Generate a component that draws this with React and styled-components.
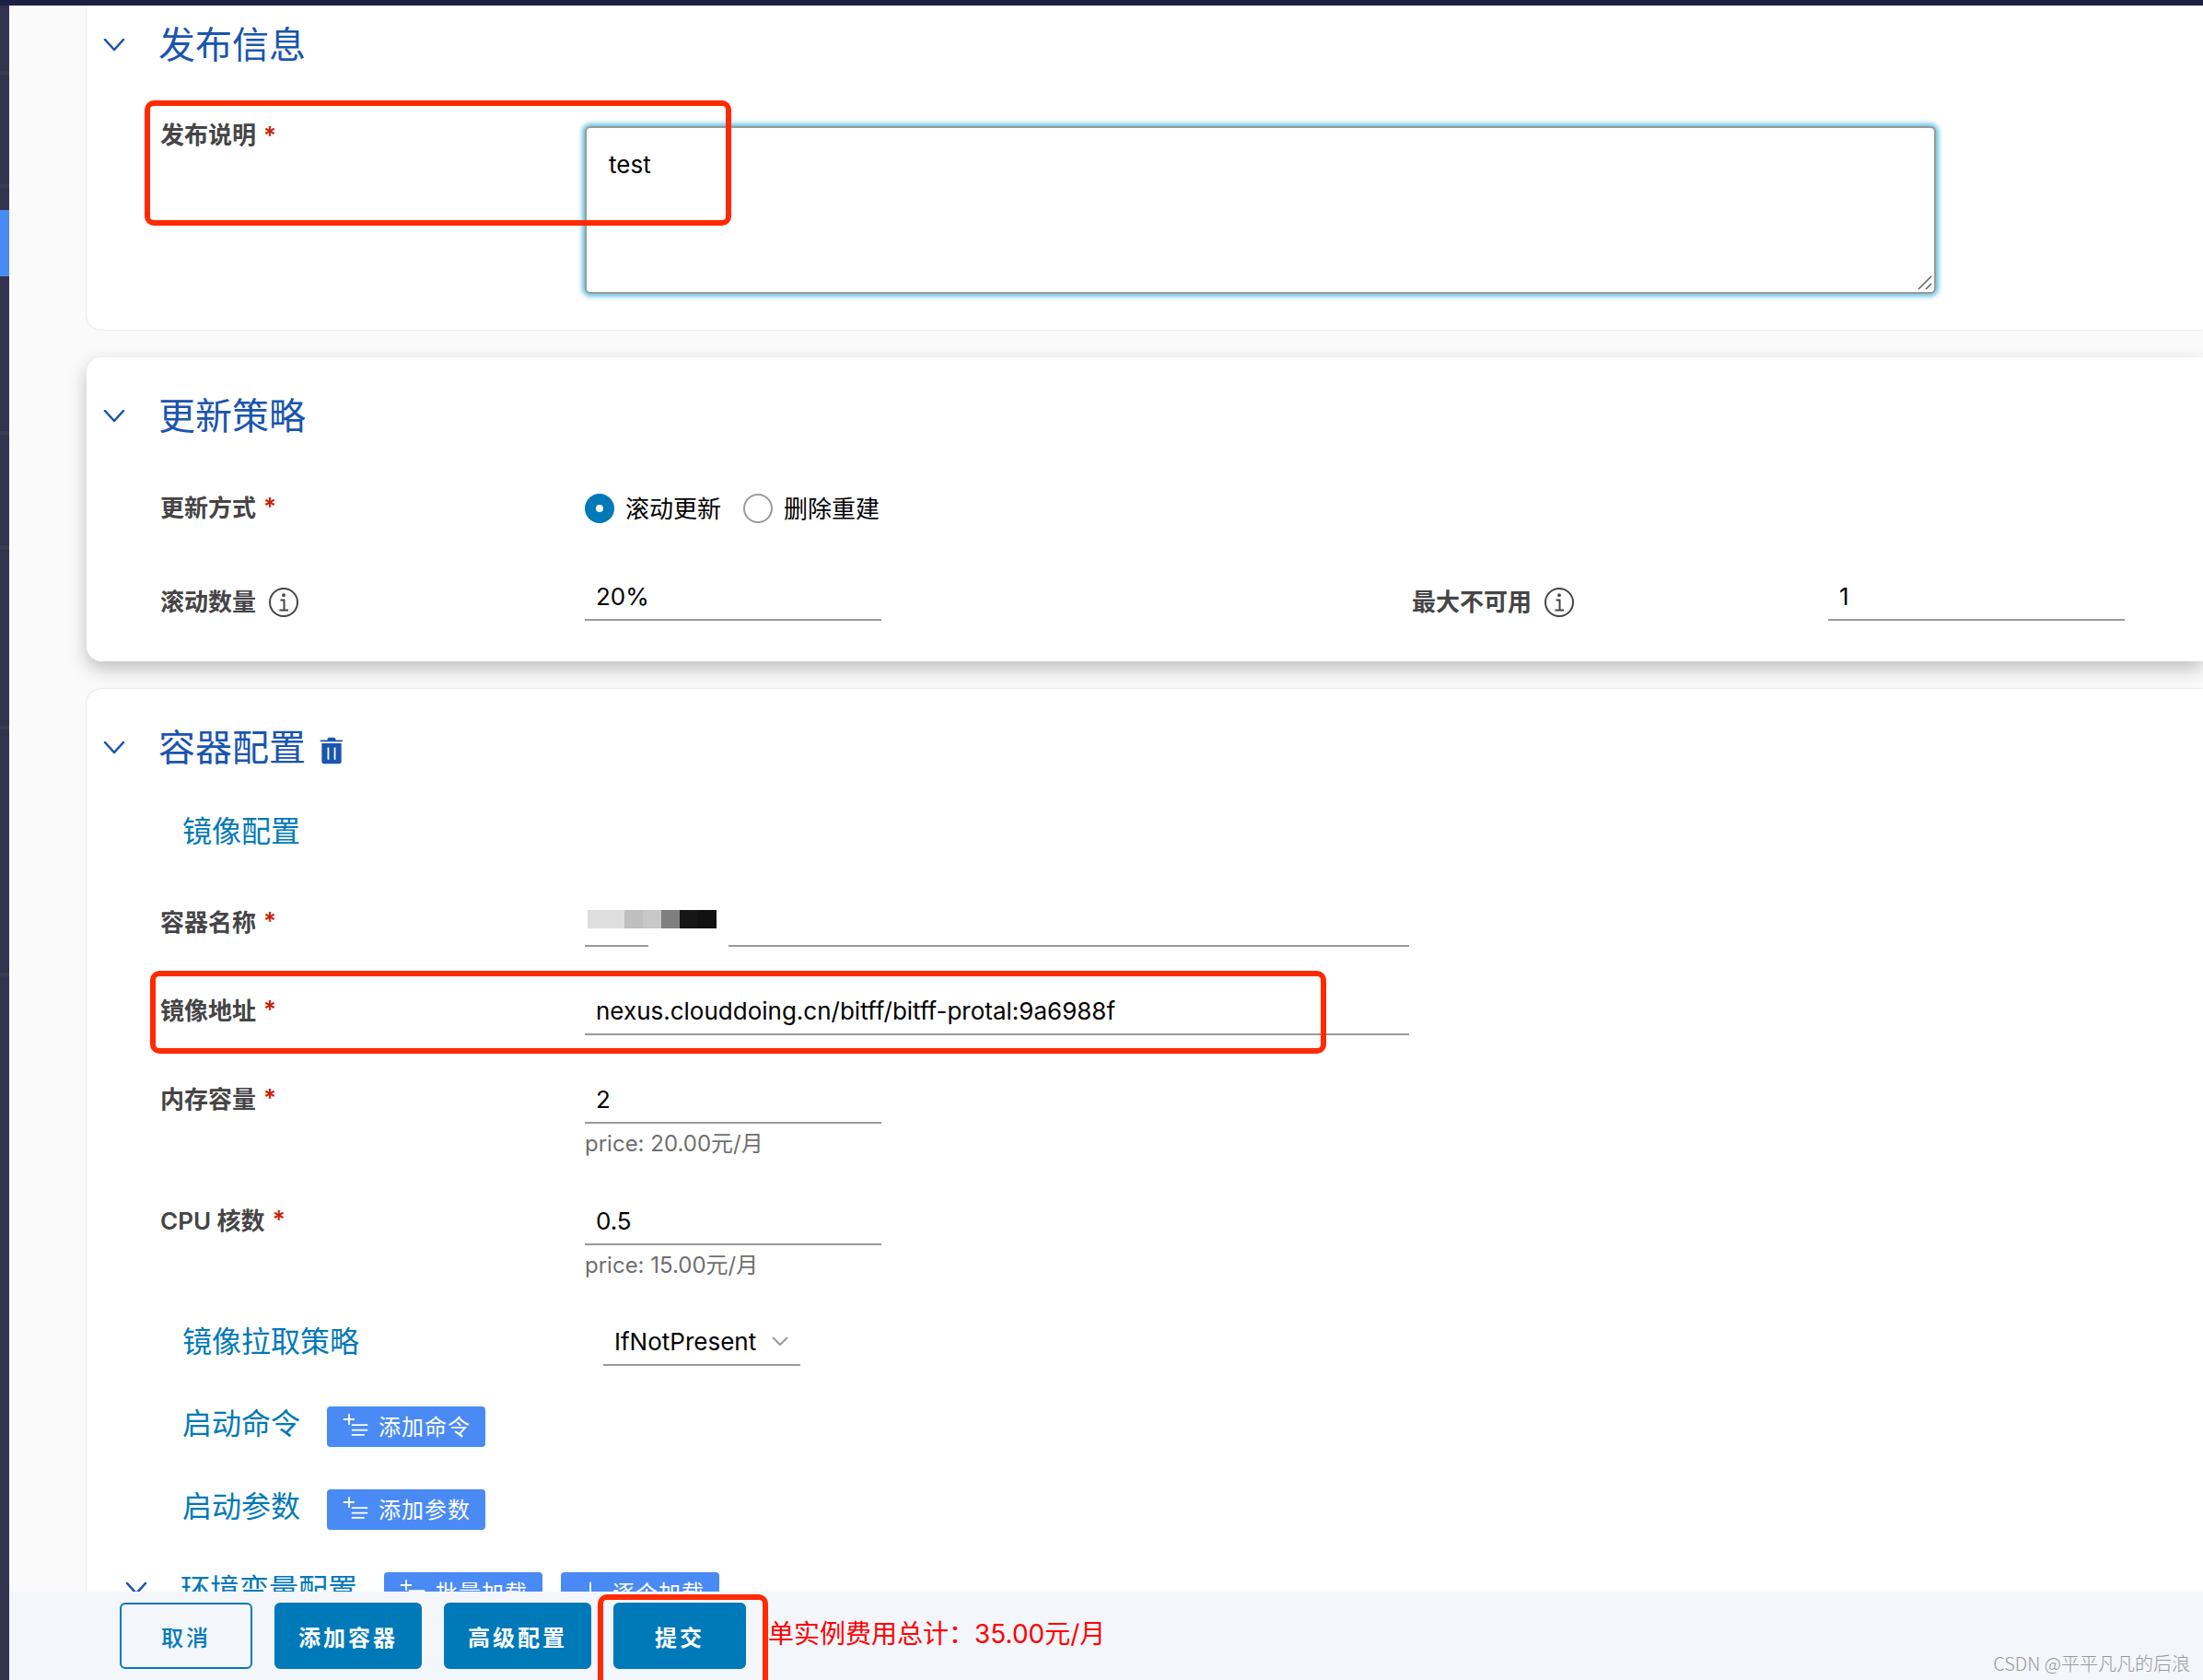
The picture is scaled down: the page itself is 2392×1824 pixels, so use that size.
import React, { useState } from "react";
import styled, { createGlobalStyle, css } from "styled-components";

const Page = () => {
  const [strategy, setStrategy] = useState("rolling");

  return (
    <Shell>
      <GlobalStyle />
      <TopBar />
      <Body>
        <SideBar aria-label="导航">
          {navItems.map((item) => (
            <NavItem
              key={item.id}
              $height={item.height}
              $active={item.active}
              $divided={item.divided}
            />
          ))}
        </SideBar>

        <Main>
          <Content>
            <Card $first>
              <CardHeader>
                <ToggleButton type="button" aria-label="收起发布信息">
                  <Chevron />
                </ToggleButton>
                <CardTitle>发布信息</CardTitle>
              </CardHeader>
              <NoteRow>
                <NoteLabel htmlFor="note">
                  发布说明<Required>*</Required>
                </NoteLabel>
                <TextAreaBox>
                  <TextArea id="note" defaultValue="test" />
                  <Grip viewBox="0 0 16 16" aria-hidden="true">
                    <path d="M1 15L15 1M9 15l6-6" />
                  </Grip>
                </TextAreaBox>
                <NoteMark />
              </NoteRow>
            </Card>

            <Card $raised>
              <CardHeader>
                <ToggleButton type="button" aria-label="收起更新策略">
                  <Chevron />
                </ToggleButton>
                <CardTitle>更新策略</CardTitle>
              </CardHeader>
              <FormRow>
                <Label as="span" id="strategy-label">
                  更新方式<Required>*</Required>
                </Label>
                <RadioGroup role="radiogroup" aria-labelledby="strategy-label">
                  <RadioLabel>
                    <Radio
                      type="radio"
                      name="strategy"
                      checked={strategy === "rolling"}
                      onChange={() => setStrategy("rolling")}
                    />
                    <Caption>滚动更新</Caption>
                  </RadioLabel>
                  <RadioLabel>
                    <Radio
                      type="radio"
                      name="strategy"
                      checked={strategy === "recreate"}
                      onChange={() => setStrategy("recreate")}
                    />
                    <Caption>删除重建</Caption>
                  </RadioLabel>
                </RadioGroup>
              </FormRow>
              <DoubleRow>
                <InfoLabel htmlFor="surge">
                  <Caption>滚动数量</Caption>
                  <InfoIcon />
                </InfoLabel>
                <Input id="surge" defaultValue="20%" />
                <InfoLabel htmlFor="unavailable">
                  <Caption>最大不可用</Caption>
                  <InfoIcon />
                </InfoLabel>
                <Input id="unavailable" defaultValue="1" />
              </DoubleRow>
            </Card>

            <Card>
              <CardHeader>
                <ToggleButton type="button" aria-label="收起容器配置">
                  <Chevron />
                </ToggleButton>
                <CardTitle>容器配置</CardTitle>
                <IconButton type="button" aria-label="删除容器">
                  <TrashIcon />
                </IconButton>
              </CardHeader>
              <SubHeader>
                <SubTitle>镜像配置</SubTitle>
              </SubHeader>
              <FormRow>
                <Label htmlFor="container">
                  容器名称<Required>*</Required>
                </Label>
                <MaskedField>
                  <Input id="container" $wide />
                  <Mosaic>
                    {mosaicColors.map((color, index) => (
                      <MosaicCell key={index} $color={color} />
                    ))}
                  </Mosaic>
                </MaskedField>
              </FormRow>
              <FormRow>
                <Label htmlFor="image">
                  镜像地址<Required>*</Required>
                </Label>
                <Input
                  id="image"
                  $wide
                  defaultValue="nexus.clouddoing.cn/bitff/bitff-protal:9a6988f"
                />
                <ImageMark />
              </FormRow>
              <FormRow $compact>
                <Label htmlFor="memory">
                  内存容量<Required>*</Required>
                </Label>
                <Field>
                  <Input id="memory" defaultValue="2" />
                  <HelpText>price: 20.00元/月</HelpText>
                </Field>
              </FormRow>
              <FormRow $compact>
                <Label htmlFor="cpu">
                  CPU 核数<Required>*</Required>
                </Label>
                <Field>
                  <Input id="cpu" defaultValue="0.5" />
                  <HelpText>price: 15.00元/月</HelpText>
                </Field>
              </FormRow>
              <PolicyRow>
                <SubTitle as="label" htmlFor="policy">
                  镜像拉取策略
                </SubTitle>
                <SelectBox>
                  <Select id="policy" defaultValue="IfNotPresent">
                    <option>IfNotPresent</option>
                    <option>Always</option>
                    <option>Never</option>
                  </Select>
                  <SelectArrow viewBox="0 0 18 10" aria-hidden="true">
                    <path d="M1 1l8 8 8-8" />
                  </SelectArrow>
                </SelectBox>
              </PolicyRow>
              <ActionRow>
                <SubTitle>启动命令</SubTitle>
                <SmallButton type="button">
                  <AddTextIcon />
                  <Caption>添加命令</Caption>
                </SmallButton>
              </ActionRow>
              <ActionRow>
                <SubTitle>启动参数</SubTitle>
                <SmallButton type="button">
                  <AddTextIcon />
                  <Caption>添加参数</Caption>
                </SmallButton>
              </ActionRow>
              <ActionRow $toggle>
                <ToggleButton type="button" aria-label="收起环境变量配置">
                  <Chevron />
                </ToggleButton>
                <SubTitle>环境变量配置</SubTitle>
                <SmallButton type="button">
                  <AddTextIcon />
                  <Caption>批量加载</Caption>
                </SmallButton>
                <SmallButton type="button">
                  <PlusIcon />
                  <Caption>逐个加载</Caption>
                </SmallButton>
              </ActionRow>
            </Card>
          </Content>

          <Footer>
            <Button type="button" $outline>
              取消
            </Button>
            <Button type="button">添加容器</Button>
            <Button type="button">高级配置</Button>
            <SubmitSlot>
              <Button type="submit">提交</Button>
              <SubmitMark />
            </SubmitSlot>
            <Total>单实例费用总计：35.00元/月</Total>
            <Watermark>CSDN @平平凡凡的后浪</Watermark>
          </Footer>
        </Main>
      </Body>
    </Shell>
  );
};

export default Page;

const navItems = [
  { id: 1, height: 75, divided: true },
  { id: 2, height: 123, divided: true },
  { id: 3, height: 24 },
  { id: 4, height: 72, active: true },
  { id: 5, height: 172, divided: true },
  { id: 6, height: 124, divided: true },
  { id: 7, height: 196, divided: true },
  { id: 8, height: 268, divided: true },
];

const mosaicColors = [
  "#dfdfdf",
  "#dfdfdf",
  "#bfbfbf",
  "#c8c8c8",
  "#7f7f7f",
  "#161616",
  "#111111",
];

/* ===========================
   Icons
=========================== */

const Chevron = () => (
  <ChevronSvg viewBox="0 0 24 14" aria-hidden="true">
    <path d="M2 1l10 11L22 1" />
  </ChevronSvg>
);

const InfoIcon = () => (
  <InfoSvg viewBox="0 0 32 32" aria-hidden="true">
    <circle cx="16" cy="16" r="15" />
    <path d="M12.5 13.5h4v11M11.5 24.5h9.5" />
    <circle cx="16" cy="8.2" r="0.9" />
  </InfoSvg>
);

const TrashIcon = () => (
  <TrashSvg viewBox="0 0 36 36" aria-hidden="true">
    <path d="M6,9V31a2.93,2.93,0,0,0,2.86,3H27.09A2.93,2.93,0,0,0,30,31V9Zm9,20H13V14h2Zm8,0H21V14h2Z" />
    <path d="M30.73,5H23V4A2,2,0,0,0,21,2h-6.2A2,2,0,0,0,13,4V5H5A1,1,0,1,0,5,7H30.73a1,1,0,0,0,0-2Z" />
  </TrashSvg>
);

const AddTextIcon = () => (
  <ButtonSvg viewBox="0 0 36 36" aria-hidden="true">
    <path d="M31,21H13a1,1,0,0,0,0,2H31a1,1,0,0,0,0-2Z" />
    <path d="M12,16a1,1,0,0,0,1,1H31a1,1,0,0,0,0-2H13A1,1,0,0,0,12,16Z" />
    <path d="M27,27H13a1,1,0,0,0,0,2H27a1,1,0,0,0,0-2Z" />
    <path d="M15.89,9a1,1,0,0,0-1-1H10V3.21a1,1,0,0,0-2,0V8H2.89a1,1,0,0,0,0,2H8v4.89a1,1,0,0,0,2,0V10h4.89A1,1,0,0,0,15.89,9Z" />
  </ButtonSvg>
);

const PlusIcon = () => (
  <ButtonSvg viewBox="0 0 36 36" aria-hidden="true">
    <path d="M30,17H19V6a1,1,0,1,0-2,0V17H6a1,1,0,0,0-1,1,.91.91,0,0,0,1,.94H17V30a1,1,0,1,0,2,0V19H30a1,1,0,0,0,1-1A1,1,0,0,0,30,17Z" />
  </ButtonSvg>
);

/* ===========================
   Styled Components
=========================== */

const GlobalStyle = createGlobalStyle`
  * {
    box-sizing: border-box;
  }

  body {
    margin: 0;
    color: #000;
    font-family: Inter, "Noto Sans CJK SC", sans-serif;
    font-size: 26px;
  }

  button, input, textarea, select {
    margin: 0;
    font: inherit;
    color: inherit;
  }
`;

const Shell = styled.div`
  display: flex;
  flex-direction: column;
  height: 100vh;
  overflow: hidden;
`;

const TopBar = styled.header`
  flex: none;
  height: 6px;
  background: #1c2043;
`;

const Body = styled.div`
  display: flex;
  flex: 1;
  min-height: 0;
`;

const SideBar = styled.nav`
  flex: none;
  width: 10px;
  background: #33334f;
`;

const NavItem = styled.div`
  height: ${({ $height }) => $height}px;
  border-bottom: ${({ $divided }) => ($divided ? "4px solid #3b3c50" : "none")};
  background: ${({ $active }) => ($active ? "#4a8af4" : "transparent")};
`;

const Main = styled.main`
  display: flex;
  flex: 1;
  flex-direction: column;
  min-width: 0;
`;

const Content = styled.div`
  display: flex;
  flex: 1;
  flex-direction: column;
  gap: 30px;
  min-height: 0;
  padding-left: 84px;
  overflow: hidden;
  background: #fafafa;
`;

const Card = styled.section`
  flex: none;
  padding: ${({ $first }) => ($first ? "19px" : "40px")} 0 0 80px;
  border-radius: ${({ $first }) => ($first ? "0 0 0 16px" : "16px 0 0 16px")};
  background: #fff;
  box-shadow: 0 0 2px rgba(0, 0, 0, 0.2);

  ${({ $raised }) =>
    $raised &&
    css`
      padding-bottom: 44px;
      box-shadow: 0 8px 20px rgba(0, 0, 0, 0.24);
    `}
`;

const CardHeader = styled.div`
  display: flex;
  align-items: center;
  height: 48px;
  margin: 0 0 28px -64px;
  color: #1a55ae;
`;

const ToggleButton = styled.button`
  display: flex;
  flex: none;
  align-items: center;
  justify-content: center;
  width: 28px;
  height: 28px;
  padding: 0;
  border: 0;
  background: none;
  color: #1a55ae;
`;

const CardTitle = styled.h2`
  margin: 0 0 0 34px;
  font-size: 40px;
  font-weight: 400;
  line-height: 48px;
`;

const IconButton = styled.button`
  display: flex;
  margin-left: 12px;
  padding: 6px 0 0;
  border: 0;
  background: none;
  color: inherit;
`;

const ChevronSvg = styled.svg`
  width: 24px;
  height: 14px;
  fill: none;
  stroke: currentColor;
  stroke-width: 2.6;
  stroke-linecap: round;
  stroke-linejoin: round;
`;

const InfoSvg = styled.svg`
  width: 32px;
  height: 32px;
  fill: none;
  stroke: currentColor;
  stroke-width: 2;
`;

const TrashSvg = styled.svg`
  width: 32px;
  height: 32px;
  fill: currentColor;
`;

const ButtonSvg = styled.svg`
  flex: none;
  width: 32px;
  height: 32px;
  margin-right: 8px;
  fill: currentColor;
`;

/* keeps Chinese captions level with the icon or control beside them */
const Caption = styled.span`
  padding-bottom: 4px;
`;

const FormRow = styled.div`
  position: relative;
  display: grid;
  grid-template-columns: 461px 1fr;
  align-items: start;
  padding: 22px 0 ${({ $compact }) => ($compact ? "14px" : "22px")};
`;

const DoubleRow = styled(FormRow)`
  grid-template-columns: 461px 1fr 452px 407px;
  align-items: end;
  padding-bottom: 0;
`;

const NoteRow = styled(FormRow)`
  padding: 36px 0 39px;
`;

const Label = styled.label`
  display: flex;
  align-items: center;
  min-height: 46px;
  color: #454545;
  font-weight: 600;
`;

const InfoLabel = styled(Label)`
  gap: 14px;
  min-height: 40px;
`;

const NoteLabel = styled(Label)`
  min-height: 20px;
  line-height: 20px;
`;

const Required = styled.span`
  margin-left: 8px;
  color: #c92100;
`;

const TextAreaBox = styled.div`
  position: relative;
  margin-right: 290px;
`;

const TextArea = styled.textarea`
  display: block;
  width: 100%;
  height: 182px;
  padding: 22px 24px;
  border: 2px solid #9a9a9a;
  border-radius: 6px;
  outline: none;
  background: #fff;
  line-height: 36px;
  resize: none;
  box-shadow: 0 0 5px 3px #6bc1e3;
`;

const Grip = styled.svg`
  position: absolute;
  right: 4px;
  bottom: 4px;
  width: 16px;
  height: 16px;
  fill: none;
  stroke: #555;
  stroke-width: 1.4;
  pointer-events: none;
`;

const Input = styled.input`
  display: block;
  width: ${({ $wide }) => ($wide ? "895px" : "322px")};
  max-width: 100%;
  height: 52px;
  padding: 0 12px;
  border: 0;
  border-bottom: 2px solid #9a9a9a;
  outline: none;
  background: transparent;
`;

const RadioGroup = styled.div`
  display: flex;
  gap: 24px;
  height: 52px;
`;

const RadioLabel = styled.label`
  display: flex;
  align-items: center;
  gap: 12px;
`;

const Radio = styled.input`
  appearance: none;
  width: 32px;
  height: 32px;
  border: 2px solid #9a9a9a;
  border-radius: 50%;
  background: #fff;

  &:checked {
    border: 12px solid #0079b8;
  }
`;

const Field = styled.div`
  display: flex;
  flex-direction: column;
`;

const HelpText = styled.span`
  color: #6f6f6f;
  font-size: 24px;
  line-height: 44px;
`;

const MaskedField = styled.div`
  position: relative;
`;

const Mosaic = styled.div`
  position: absolute;
  top: 12px;
  left: 3px;
  display: flex;
  height: 20px;

  &::after {
    content: "";
    position: absolute;
    top: 36px;
    left: 66px;
    width: 87px;
    height: 6px;
    background: #fff;
  }
`;

const MosaicCell = styled.span`
  width: 20px;
  background: ${({ $color }) => $color};
`;

const SubHeader = styled.div`
  display: flex;
  align-items: center;
  height: 78px;
  margin-bottom: 12px;
  padding-left: 24px;
`;

const SubTitle = styled.h3`
  margin: 0;
  color: #0079b8;
  font-size: 32px;
  font-weight: 400;
  line-height: 48px;
`;

const PolicyRow = styled.div`
  display: grid;
  grid-template-columns: 457px 1fr;
  align-items: center;
  height: 94px;
  padding-left: 24px;
`;

const SelectBox = styled.div`
  position: relative;
  justify-self: start;
`;

const Select = styled.select`
  appearance: none;
  width: 214px;
  height: 52px;
  padding: 0 12px;
  border: 0;
  border-bottom: 2px solid #9a9a9a;
  border-radius: 0;
  outline: none;
  background: transparent;
`;

const SelectArrow = styled.svg`
  position: absolute;
  top: 20px;
  right: 13px;
  width: 18px;
  height: 10px;
  fill: none;
  stroke: #9a9a9a;
  stroke-width: 2;
  pointer-events: none;
`;

const ActionRow = styled.div`
  display: flex;
  align-items: center;
  height: 90px;
  padding-left: 24px;

  ${SubTitle} {
    margin-right: 29px;
    padding-bottom: 6px;
  }

  ${({ $toggle }) =>
    $toggle &&
    css`
      gap: 20px;
      margin-left: -64px;

      ${ToggleButton} {
        margin: 0 14px 8px 0;
      }

      ${SubTitle} {
        margin-right: 9px;
      }
    `}
`;

const SmallButton = styled.button`
  display: flex;
  align-items: center;
  height: 44px;
  padding: 0 16px;
  border: 0;
  border-radius: 4px;
  background: #4a8af4;
  color: #fff;
  font-size: 24px;
  letter-spacing: 1px;
  white-space: nowrap;
`;

const Footer = styled.footer`
  position: relative;
  display: flex;
  flex: none;
  gap: 24px;
  height: 96px;
  padding: 12px 16px 12px 120px;
  background: #f3f6fb;
`;

const Button = styled.button`
  min-width: 144px;
  height: 72px;
  padding: 0 24px;
  border: 2px solid #0079b8;
  border-radius: 6px;
  background: ${({ $outline }) => ($outline ? "transparent" : "#0079b8")};
  color: ${({ $outline }) => ($outline ? "#0079b8" : "#fff")};
  font-size: 24px;
  font-weight: ${({ $outline }) => ($outline ? 500 : 700)};
  letter-spacing: 3px;
  white-space: nowrap;
`;

const SubmitSlot = styled.div`
  position: relative;
`;

const Total = styled.span`
  align-self: center;
  padding-bottom: 4px;
  color: #f00;
  font-size: 28px;
  line-height: 40px;
`;

const Watermark = styled.span`
  position: absolute;
  right: 14px;
  bottom: 4px;
  color: #999;
  font-family: "Noto Sans CJK SC", sans-serif;
  font-size: 20px;
  font-weight: 300;
  line-height: 28px;
`;

const Mark = styled.span`
  position: absolute;
  border: 6px solid #ff2a00;
  border-radius: 10px;
  pointer-events: none;
`;

const NoteMark = styled(Mark)`
  top: 8px;
  left: -17px;
  width: 637px;
  height: 136px;
`;

const ImageMark = styled(Mark)`
  top: 4px;
  left: -11px;
  width: 1277px;
  height: 90px;
`;

const SubmitMark = styled(Mark)`
  top: -9px;
  left: -17px;
  width: 185px;
  height: 100px;
  border-bottom: 0;
  border-radius: 10px 10px 0 0;
`;
